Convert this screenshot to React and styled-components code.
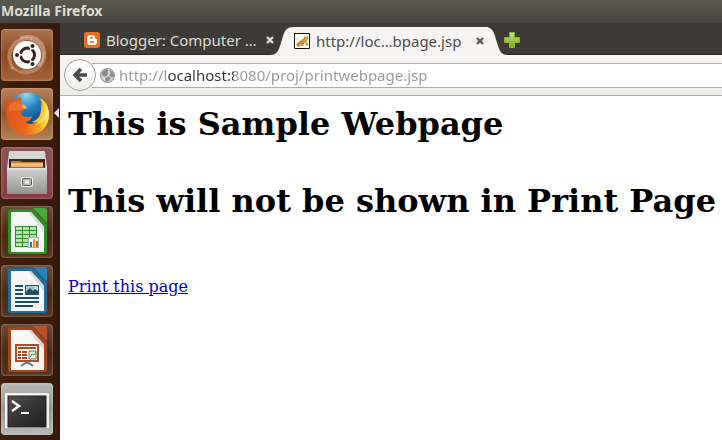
import { useState } from 'react'
import styled, { createGlobalStyle } from 'styled-components'

const uiFont = '"Noto Sans", "Open Sans", sans-serif'

const GlobalStyle = createGlobalStyle`
  * {
    box-sizing: border-box;
  }

  body {
    margin: 0;
    background: #ffffff;
  }

  button {
    padding: 0;
    border: 0;
    background: none;
    font: inherit;
    color: inherit;
    cursor: pointer;
  }
`

const Desktop = styled.div`
  display: flex;
  flex-direction: column;
  height: 100vh;
  overflow: hidden;
  font-family: ${uiFont};
`

const TitleBar = styled.header`
  flex: none;
  height: 23px;
  padding: 0 1px;
  background: linear-gradient(#5b5a50, #454440);
  color: #dfdbd2;
  font-size: 14px;
  font-weight: 700;
  line-height: 22px;
`

const Workspace = styled.div`
  display: flex;
  flex: 1;
  min-height: 0;
`

const Launcher = styled.nav`
  display: flex;
  flex: none;
  flex-direction: column;
  gap: 7px;
  width: 60px;
  padding: 6px 1px;
  background: linear-gradient(90deg, #42200a, #35190a);
  overflow: hidden;
`

const LauncherButton = styled.button`
  position: relative;
  flex: none;
  display: block;
  width: 52px;
  height: 52px;
  border-radius: 4px;
  background: ${({ $tile }) => $tile};
  box-shadow: inset 0 0 2px 1px rgba(255, 255, 255, 0.22);

  > svg {
    display: block;
  }
`

const RunningArrow = styled.span`
  position: absolute;
  top: 20px;
  left: 53px;
  border: solid transparent;
  border-width: 5px 5px 5px 0;
  border-right-color: #e8e4df;
`

const Browser = styled.div`
  display: flex;
  flex: 1;
  flex-direction: column;
  min-width: 0;
`

const TabStrip = styled.div`
  display: flex;
  flex: none;
  align-items: flex-end;
  height: 32px;
  padding-left: 24px;
  background: #3c3b37;
  border-bottom: 1px solid #2a2926;
`

const TabEdge = styled.svg`
  flex: none;
  display: block;
  width: 24px;
  height: 28px;
`

const Tab = styled.div`
  display: flex;
  align-items: center;
  width: 194px;
  height: 28px;
  background: ${({ $active }) => ($active ? '#f6f5f4' : 'transparent')};
  color: ${({ $active }) => ($active ? '#4c4c4c' : '#dfdbd2')};
`

// The curved edges reach a little over the neighbouring items.
const ActiveTab = styled.div`
  display: flex;
  height: 28px;
  margin: 0 -4px -1px -8px;

  ${Tab} {
    margin-right: -4px;
  }
`

const TabLabel = styled.button`
  display: flex;
  flex: 1;
  align-items: center;
  gap: 6px;
  min-width: 0;
  font-size: 15px;
  line-height: 20px;
  white-space: nowrap;

  svg {
    flex: none;
  }
`

const IconButton = styled.button`
  display: flex;
  flex: none;
  align-items: center;
  justify-content: center;
  width: 16px;
  height: 28px;
`

const NavBar = styled.form`
  display: flex;
  flex: none;
  align-items: center;
  height: 41px;
  padding-left: 4px;
  background: linear-gradient(#f6f5f4, #efeeeb);
  border-bottom: 1px solid #aeadab;
`

const BackButton = styled.button`
  z-index: 1;
  display: flex;
  flex: none;
  align-items: center;
  justify-content: center;
  width: 32px;
  height: 32px;
  border: 1px solid #a5a4a2;
  border-radius: 50%;
  background: linear-gradient(#ffffff, #ededeb);
`

const AddressBox = styled.label`
  display: flex;
  flex: 1;
  align-items: center;
  gap: 4px;
  min-width: 0;
  height: 25px;
  margin-left: -4px;
  padding-left: 8px;
  border: solid #aeadab;
  border-width: 1px 0;
  background: #ffffff;

  svg {
    flex: none;
  }
`

// The host part of the address is darker than the rest of it.
const AddressInput = styled.input`
  flex: 1;
  min-width: 0;
  height: 22px;
  padding: 0;
  border: 0;
  outline: 0;
  background: linear-gradient(90deg, #999999 48px, #333333 48px, #333333 115px, #999999 115px);
  background-clip: text;
  color: transparent;
  font-family: ${uiFont};
  font-size: 15px;
`

const Page = styled.main`
  flex: 1;
  padding: 10px 8px;
  background: #ffffff;
  color: #000000;
  font-family: "DejaVu Serif", serif;
  font-size: 16px;
  line-height: 19px;
`

const Heading = styled.h1`
  margin: 0 0 40px;
  font-size: 32px;
  line-height: 37px;
  white-space: nowrap;
`

const PageLink = styled.a`
  display: inline-block;
  margin-top: 17px;
  color: #0000cc;
`

function UbuntuIcon() {
  return (
    <svg width="52" height="52" viewBox="0 0 52 52" aria-hidden="true">
      <g fill="none" stroke="#f5dfc8">
        <path d="M8 31C7 16 17 7 31 10M12 40C5 27 9 15 24 12" strokeOpacity=".35" strokeWidth="3" />
        <path d="M19 9C33 4 46 13 43 29M30 10c12 4 16 17 8 27" strokeOpacity=".4" strokeWidth="3" />
        <path d="M43 23c2 13-8 22-22 19M40 34c-6 11-19 13-29 4" strokeOpacity=".3" strokeWidth="3" />
      </g>
      <circle cx="26" cy="26" r="14" fill="#fff" />
      <circle cx="26.500" cy="26" r="7" fill="none" stroke="#3b2314" strokeWidth="3" />
      <g stroke="#fff" strokeWidth="1.300">
        <path d="M26.500 26l-10 0M26.500 26l5-8.700M26.500 26l5 8.700" />
        <circle cx="26.500" cy="26" r="5" fill="#fff" stroke="none" />
        <g fill="#3b2314">
          <circle cx="16" cy="26" r="2.700" />
          <circle cx="31.500" cy="17" r="2.700" />
          <circle cx="31.500" cy="35" r="2.700" />
        </g>
      </g>
    </svg>
  )
}

function FirefoxIcon() {
  return (
    <svg width="52" height="52" viewBox="0 0 52 52" aria-hidden="true">
      <defs>
        <radialGradient id="ffGlobe" cx=".45" cy=".05" r=".8">
          <stop offset="0" stopColor="#8fd8f2" />
          <stop offset=".45" stopColor="#2480bd" />
          <stop offset="1" stopColor="#0d3f78" />
        </radialGradient>
        <linearGradient id="ffFox" x1="0" y1="0" x2="1" y2=".1">
          <stop offset="0" stopColor="#d8531c" />
          <stop offset=".55" stopColor="#ee681f" />
          <stop offset=".85" stopColor="#f9a722" />
          <stop offset="1" stopColor="#ffe04d" />
        </linearGradient>
      </defs>
      <circle cx="27" cy="25" r="20.500" fill="url(#ffGlobe)" />
      <path
        d="M7 10Q9 13 13 12Q17 9 21 10Q19 13 21 16Q25 17 26 20Q24 22 21 23Q19 26 22 28Q27 30 31 28Q30 33 24 34Q30 38 36 34Q42 28 41 19Q41 14 38 10Q50 18 48 30Q44 47 27 47Q8 46 5 28Q4 18 7 10z"
        fill="url(#ffFox)"
      />
      <path d="M38 9Q45 15 43 25Q41 33 34 37Q45 35 47 24Q48 15 38 9z" fill="#ffe14a" />
      <path d="M40 16Q41 23 38 29Q35 33 31 34Q37 36 41 30Q45 23 40 16z" fill="#ffc62e" />
      <path d="M45 18Q47 27 41 34Q47 31 48 24z" fill="#fff5a0" opacity=".8" />
      <path d="M8 18Q12 13 18 13Q19 17 23 19Q20 22 17 23Q12 21 8 24z" fill="#f28a4a" opacity=".45" />
      <path d="M21 16Q25 17 26 20Q24 21 21 20z" fill="#f6c9a0" opacity=".7" />
    </svg>
  )
}

function FilesIcon() {
  return (
    <svg width="52" height="52" viewBox="0 0 52 52" aria-hidden="true">
      <defs>
        <linearGradient id="cabinet" x1="0" y1="0" x2="0" y2="1">
          <stop offset="0" stopColor="#d2d2d0" />
          <stop offset="1" stopColor="#929290" />
        </linearGradient>
      </defs>
      <path d="M8 5c0-1 1-1 2-1h32c1 0 2 0 2 1l2 16H6z" fill="#d5d5d3" />
      <path d="M8 12h36v10H8z" fill="#362b24" />
      <path d="M10 14h9l2 1h21v7H10z" fill="#d8792b" />
      <path d="M10 17h32v4H10z" fill="#f4b16e" />
      <path d="M10 17h32" stroke="#ffe0b5" />
      <path d="M9 20h34v2H9z" fill="#bd6124" />
      <rect x="6" y="21" width="40" height="26" rx="1" fill="url(#cabinet)" />
      <path d="M6 22h40" stroke="#eee" />
      <rect x="20.500" y="30.500" width="11" height="9" rx="1" fill="#ddd" stroke="#f4f4f2" />
      <rect x="21.500" y="31.500" width="9" height="7" rx="1" fill="#b8b8b6" stroke="#595957" />
      <path d="M24 35h4" stroke="#f4f4f2" strokeWidth="3" />
    </svg>
  )
}

function OfficeDocument({ color, light, children }) {
  return (
    <svg width="52" height="52" viewBox="0 0 52 52" aria-hidden="true">
      <path d="M32 2h12c1 0 2 1 2 2v13z" fill={light} />
      <path d="M7 5c0-1 1-2 2-2h23l14 15v28c0 1-1 2-2 2H9c-1 0-2-1-2-2z" fill={color} />
      <path d="M10 6h20l13 14v26H10z" fill="#f7f7f7" />
      <path d="M30 6l13 14v6L27 6z" fill="#d7dadb" />
      <path d="M29 4h3l14 16v4z" fill={color} />
      {children}
    </svg>
  )
}

function CalcIcon() {
  return (
    <OfficeDocument color="#288f27" light="#43ad38">
      <path d="M14 20h22v21H14z" fill="#2c8b2a" />
      <g fill="#b9e5ac">
        {[21, 25, 29, 33, 37].map((y) => (
          <path key={y} d={`M15 ${y}h6v3h-6zM22 ${y}h6v3h-6zM29 ${y}h6v3h-6z`} />
        ))}
      </g>
      <rect x="27.500" y="31.500" width="10" height="10" fill="#fff" stroke="#aaa" />
      <path d="M29 36h2v5h-2z" fill="#2878b9" />
      <path d="M32 33h2v8h-2z" fill="#ef8d29" />
      <path d="M35 35h2v6h-2z" fill="#d95626" />
    </OfficeDocument>
  )
}

function WriterIcon() {
  return (
    <OfficeDocument color="#246c98" light="#2585b9">
      <path d="M14 21h8M14 25h8M14 29h8M14 33h24M14 37h24M14 41h18" stroke="#164f72" strokeWidth="2" />
      <rect x="24.500" y="20.500" width="13" height="9" fill="#91cbe6" stroke="#1d577b" />
      <circle cx="35" cy="23" r="1.500" fill="#f6edb4" />
      <path d="M25 29v-2l4-4 3 3 2-2 4 3v2z" fill="#284b53" />
    </OfficeDocument>
  )
}

function ImpressIcon() {
  return (
    <OfficeDocument color="#a5451c" light="#b7542d">
      <path d="M15 21h22v16H15z" fill="#fff" stroke="#b14c21" strokeWidth="2" />
      <path d="M17 24h18" stroke="#b14c21" strokeWidth="2" />
      <path d="M17 28h3M17 31h3M17 34h3M21 28h5M21 31h5M21 34h5" stroke="#a14722" strokeWidth="2" />
      <path d="M28 27h7v8h-7z" fill="#eef7ec" stroke="#567d69" />
      <path d="M29 33l2-3 2 1 2-3" fill="none" stroke="#3d9245" />
      <path d="M26 37v3m-6 2l6-4 6 4" fill="none" stroke="#6f7779" strokeWidth="2" />
    </OfficeDocument>
  )
}

function TerminalIcon() {
  return (
    <svg width="52" height="52" viewBox="0 0 52 52" aria-hidden="true">
      <defs>
        <linearGradient id="screen" x1="0" y1="0" x2="1" y2="1">
          <stop offset="0" stopColor="#555" />
          <stop offset=".5" stopColor="#333" />
          <stop offset="1" stopColor="#202020" />
        </linearGradient>
      </defs>
      <rect x="4" y="10" width="44" height="37" rx="1" fill="#f2f2f0" />
      <path d="M4 46h44" stroke="#777" />
      <rect x="7" y="13" width="38" height="31" fill="url(#screen)" stroke="#222" />
      <path d="M11 18l7 5-7 5" fill="none" stroke="#fff" strokeWidth="2.500" />
      <path d="M20 30h8" stroke="#fff" strokeWidth="2" />
    </svg>
  )
}

function BloggerIcon() {
  return (
    <svg width="16" height="16" viewBox="0 0 16 16" aria-hidden="true">
      <rect width="16" height="16" rx="3" fill="#f06a1d" />
      <path d="M6 3h2.500C10.500 3 11 4.500 11 6c0 1 2 0 2 2v2c0 2-1 3-3 3H6c-2 0-3-1-3-3V6c0-2 1-3 3-3z" fill="#fff" />
      <path d="M6.300 6h2M6.300 10h3.500" stroke="#f06a1d" strokeWidth="1.400" strokeLinecap="round" />
    </svg>
  )
}

function TomcatIcon() {
  return (
    <svg width="16" height="16" viewBox="0 0 16 16" aria-hidden="true">
      <path d="M.500.500h15v15H.500z" fill="#fff" stroke="#111" />
      <path d="M2 12l2-3 2-1 2-2 2-1V3l2 1 2-1v3l-1 2 1 4h-2l-1-2-2 1 1 2H7l-1-1-2 1z" fill="#d2a43f" />
      <path d="M3 12l3-2M6 8l2 1M10 5l1 1m2-2v1M8 11l2-1m2 2h2M3 13h3" stroke="#6d5224" strokeWidth=".800" />
      <path d="M2 5l3 2M2 8h2" stroke="#bbb" strokeWidth=".700" />
    </svg>
  )
}

function CloseIcon({ color }) {
  return (
    <svg width="8" height="8" viewBox="0 0 8 8" aria-hidden="true">
      <path d="M1 1l6 6M7 1L1 7" stroke={color} strokeWidth="2.400" />
    </svg>
  )
}

function PlusIcon() {
  return (
    <svg width="16" height="16" viewBox="0 0 16 16" aria-hidden="true">
      <defs>
        <linearGradient id="plus" x1="0" y1="0" x2="0" y2="1">
          <stop offset="0" stopColor="#c4e46b" />
          <stop offset="1" stopColor="#78ad25" />
        </linearGradient>
      </defs>
      <path d="M5.500.500h5v5h5v5h-5v5h-5v-5h-5v-5h5z" fill="url(#plus)" stroke="#8ab13b" />
    </svg>
  )
}

function BackIcon() {
  return (
    <svg width="16" height="16" viewBox="0 0 16 16" aria-hidden="true">
      <path d="M9 2L3 8l6 6M3 8h12" fill="none" stroke="#4c4c4a" strokeWidth="3.500" />
    </svg>
  )
}

function GlobeIcon() {
  return (
    <svg width="15" height="15" viewBox="0 0 14 14" aria-hidden="true">
      <circle cx="7" cy="7" r="6.500" fill="#d6d6d6" stroke="#999" />
      <path d="M2 4l3-3 3 1-1 2 1 1-2 3-2 0-2-1zM9 2l3 2 1 4-2 1-2-2 1-2zM5 9l4-1 1 2-3 3-2-1z" fill="#8c8c8c" />
    </svg>
  )
}

const officeTile = 'linear-gradient(#6a4a36, #4a2814 55%, #573621)'

const apps = [
  { name: 'Dash', tile: 'linear-gradient(#aa714f, #8c4c21 50%, #a2633a)', Icon: UbuntuIcon },
  { name: 'Firefox', tile: 'linear-gradient(#b98159, #94552d 50%, #b68056)', Icon: FirefoxIcon, running: true },
  { name: 'Files', tile: 'linear-gradient(#8f5155, #853c43)', Icon: FilesIcon },
  { name: 'Calc', tile: officeTile, Icon: CalcIcon },
  { name: 'Writer', tile: officeTile, Icon: WriterIcon },
  { name: 'Impress', tile: officeTile, Icon: ImpressIcon },
  { name: 'Terminal', tile: 'linear-gradient(#b9b8b6, #979694 50%, #b8b7b5)', Icon: TerminalIcon },
]

function App() {
  const [address, setAddress] = useState('http://localhost:8080/proj/printwebpage.jsp')

  return (
    <>
      <GlobalStyle />
      <Desktop>
        <TitleBar>Mozilla Firefox</TitleBar>
        <Workspace>
          <Launcher>
            {apps.map(({ name, tile, Icon, running }) => (
              <LauncherButton key={name} type="button" aria-label={name} $tile={tile}>
                <Icon />
                {running && <RunningArrow />}
              </LauncherButton>
            ))}
          </Launcher>

          <Browser>
            <TabStrip>
              <Tab>
                <TabLabel type="button">
                  <BloggerIcon />
                  Blogger: Computer …
                </TabLabel>
                <IconButton type="button" aria-label="Close tab">
                  <CloseIcon color="#dfdbd2" />
                </IconButton>
              </Tab>
              <ActiveTab>
                <TabEdge viewBox="0 0 24 28" aria-hidden="true">
                  <path d="M0 28c6 0 8-3 10-9l3-10c2-6 4-9 11-9v28z" fill="#f6f5f4" />
                </TabEdge>
                <Tab $active>
                  <TabLabel type="button">
                    <TomcatIcon />
                    http://loc…bpage.jsp
                  </TabLabel>
                  <IconButton type="button" aria-label="Close tab">
                    <CloseIcon color="#5a5a58" />
                  </IconButton>
                </Tab>
                <TabEdge viewBox="0 0 24 28" aria-hidden="true">
                  <path d="M24 28c-6 0-8-3-10-9L11 9C9 3 7 0 0 0v28z" fill="#f6f5f4" />
                </TabEdge>
              </ActiveTab>
              <IconButton type="button" aria-label="New tab">
                <PlusIcon />
              </IconButton>
            </TabStrip>

            <NavBar onSubmit={(e) => e.preventDefault()}>
              <BackButton type="button" aria-label="Back">
                <BackIcon />
              </BackButton>
              <AddressBox>
                <GlobeIcon />
                <AddressInput
                  type="text"
                  aria-label="Address"
                  spellCheck={false}
                  value={address}
                  onChange={(e) => setAddress(e.target.value)}
                />
              </AddressBox>
            </NavBar>

            <Page>
              <Heading>This is Sample Webpage</Heading>
              <Heading>This will not be shown in Print Page</Heading>
              <PageLink href="#print">Print this page</PageLink>
            </Page>
          </Browser>
        </Workspace>
      </Desktop>
    </>
  )
}

export default App
